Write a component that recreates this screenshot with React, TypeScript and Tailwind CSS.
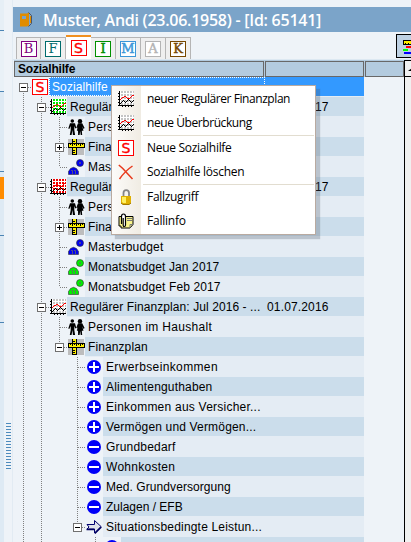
import React from "react";

type IconName = "case" | "chartGreen" | "chartRed" | "chart" | "people" | "ruler" | "blue" | "green" | "plus" | "minus" | "arrow";

function Chart({ grid }: { grid: string }) {
  return (
    <svg width="17" height="17" viewBox="0 0 17 17" shapeRendering="crispEdges" className="shrink-0">
      <rect x="2" y="0" width="14" height="14" fill="#fff" />
      {[1, 4, 7, 10, 13].map((y) => (
        <path key={y} d={`M3 ${y}h13`} stroke={grid} strokeWidth="2" strokeDasharray="2 1" />
      ))}
      <path d="M1.500 0v15M1 14.500h15M0 2.500h1M0 5.500h1M0 8.500h1M0 11.500h1M0 14.500h1M4.500 15v1M7.500 15v1M10.500 15v1M13.500 15v1" stroke="#000" fill="none" />
      <path d="M2 8h1v1H2zM3 7h1v1H3zM4 6h2v1H4zM6 5h2v1H6zM8 6h1v1H8zM9 7h3v1H9zM12 6h1v1h-1zM13 5h1v1h-1zM14 4h2v1h-2z" fill="#f00" />
      <path d="M2 12h1v1H2zM3 11h1v1H3zM4 10h1v1H4zM5 9h1v1H5zM6 10h1v1H6zM7 11h1v1H7zM8 10h1v1H8zM9 9h1v1H9zM10 8h1v1h-1zM11 9h1v1h-1zM12 10h1v1h-1zM13 11h1v1h-1zM14 10h1v1h-1zM15 9h1v1h-1z" fill="#000" />
    </svg>
  );
}

function CaseS() {
  return (
    <span className="flex h-4 w-4 shrink-0 items-center justify-center border border-[#f00] bg-white font-['DejaVu_Sans',sans-serif] text-[14px] leading-none text-[#f00] [-webkit-text-stroke:0.4px_#f00]">
      S
    </span>
  );
}

function Figures({ color }: { color: string }) {
  return (
    <svg width="17" height="17" viewBox="0 0 17 17" className="shrink-0">
      <g fill={color} stroke="#333" strokeWidth=".6">
        <circle cx="12" cy="4" r="3.500" />
        <path d="M.5 15.500v-3l2-3 3-1.200 3 1.200 2 3v3z" />
      </g>
      <path d="M3 11.500h1.500v4M6 11.500h1.500v4M11 4h2M12 3v2" stroke="#666" strokeWidth=".8" fill="none" />
    </svg>
  );
}

function TreeIcon({ name }: { name: IconName }) {
  switch (name) {
    case "case":
      return <CaseS />;
    case "chartGreen":
      return <Chart grid="#00e800" />;
    case "chartRed":
      return <Chart grid="#f00000" />;
    case "chart":
      return <Chart grid="#c4c4c4" />;
    case "blue":
      return <Figures color="#0000f0" />;
    case "green":
      return <Figures color="#00f000" />;
    case "people":
      return (
        <svg width="17" height="17" viewBox="0 0 17 17" className="shrink-0">
          <circle cx="4.300" cy="2" r="1.800" />
          <circle cx="12" cy="2.300" r="2.200" />
          <path d="M2 4.300h5L8.300 9l-1 .6L6.300 7v4l.8 5H4.900l-.5-5-.8 5H1.800l.9-5V7L1.300 10l-1-.6zM10 4.300h4.200L16.600 9l-1 1-1.300-2.500 1.200 4.300h-1.700l.4 4.200h-1.500L12.200 12l-.6 4h-1.500l-.1-4.200H8.800L10 7.500 9.200 9.500 8.400 8.600z" />
        </svg>
      );
    case "ruler":
      return (
        <svg width="17" height="16" viewBox="0 0 17 16" shapeRendering="crispEdges" className="shrink-0">
          <rect width="16" height="16" fill="#bdbdbd" />
          <path d="M4.500 0v15.500h4V0" fill="#ffee00" stroke="#000" />
          <path d="M5 2.500h2M5 11.500h2M5 13.500h2" stroke="#000" />
          <path d="M0 4.500h16v4H0z" fill="#ffee00" stroke="#000" />
          <path d="M2.500 5v1M4.500 5v2M6.500 5v1M8.500 5v2M10.500 5v1M12.500 5v2M14.500 5v1" stroke="#000" />
        </svg>
      );
    case "plus":
    case "minus":
      return (
        <svg width="16" height="16" viewBox="0 0 16 16" className="shrink-0">
          <circle cx="8" cy="8" r="7" fill="#0000f8" />
          <path d={name === "plus" ? "M3 8h10M8 3v10" : "M3 8h10"} stroke="#fff" strokeWidth="2" shapeRendering="crispEdges" />
        </svg>
      );
    case "arrow":
      return (
        <svg width="17" height="16" viewBox="0 0 17 16" className="shrink-0">
          <path d="M1 5.500h7.500v-4l6.500 6-6.500 6.500v-4H1L3 8z" fill="#dfe2ea" stroke="#000070" />
          <path d="M.5 10.500h8M8.800 14.500l6.500-6.500" stroke="#000060" strokeWidth="1.600" fill="none" />
        </svg>
      );
  }
}

/* Guide codes: "|" through line, "t" branch, "l" last branch, "r" root, " " blank. */
type Item = { guides: string; box?: "+" | "-"; icon: IconName; text: string; date?: string; tracking: string };

const items: Item[] = [
  { guides: "r", box: "-", icon: "case", text: "Sozialhilfe", tracking: "tracking-[0.1px]" },
  { guides: "|t", box: "-", icon: "chartGreen", text: "Regulärer Finanzplan: Jan 2017 - ...", date: "01.01.2017", tracking: "tracking-[0.08px]" },
  { guides: "||t", icon: "people", text: "Personen im Haushalt", tracking: "tracking-[0.3px]" },
  { guides: "||t", box: "+", icon: "ruler", text: "Finanzplan", tracking: "tracking-[0.1px]" },
  { guides: "||l", icon: "blue", text: "Masterbudget", tracking: "tracking-[0.17px]" },
  { guides: "|t", box: "-", icon: "chartRed", text: "Regulärer Finanzplan: Jan 2017 - ...", date: "01.01.2017", tracking: "tracking-[0.08px]" },
  { guides: "||t", icon: "people", text: "Personen im Haushalt", tracking: "tracking-[0.3px]" },
  { guides: "||t", box: "+", icon: "ruler", text: "Finanzplan", tracking: "tracking-[0.1px]" },
  { guides: "||t", icon: "blue", text: "Masterbudget", tracking: "tracking-[0.17px]" },
  { guides: "||t", icon: "green", text: "Monatsbudget Jan 2017", tracking: "tracking-[0.12px]" },
  { guides: "||l", icon: "green", text: "Monatsbudget Feb 2017", tracking: "tracking-[0.12px]" },
  { guides: "|t", box: "-", icon: "chart", text: "Regulärer Finanzplan: Jul 2016 - ...", date: "01.07.2016", tracking: "tracking-[0.08px]" },
  { guides: "||t", icon: "people", text: "Personen im Haushalt", tracking: "tracking-[0.3px]" },
  { guides: "||l", box: "-", icon: "ruler", text: "Finanzplan", tracking: "tracking-[0.1px]" },
  { guides: "|| t", icon: "plus", text: "Erwerbseinkommen", tracking: "tracking-[0.37px]" },
  { guides: "|| t", icon: "plus", text: "Alimentenguthaben", tracking: "tracking-[0.18px]" },
  { guides: "|| t", icon: "plus", text: "Einkommen aus Versicher...", tracking: "tracking-[0.23px]" },
  { guides: "|| t", icon: "plus", text: "Vermögen und Vermögen...", tracking: "tracking-[0.17px]" },
  { guides: "|| t", icon: "minus", text: "Grundbedarf", tracking: "tracking-[0.2px]" },
  { guides: "|| t", icon: "minus", text: "Wohnkosten", tracking: "tracking-[0.27px]" },
  { guides: "|| t", icon: "minus", text: "Med. Grundversorgung", tracking: "tracking-[0.07px]" },
  { guides: "|| t", icon: "minus", text: "Zulagen / EFB", tracking: "tracking-normal" },
  { guides: "|| l", box: "-", icon: "arrow", text: "Situationsbedingte Leistun...", tracking: "tracking-[0.18px]" },
  { guides: "||  t", icon: "minus", text: "", tracking: "tracking-normal" },
];

function Guide({ code, box }: { code: string; box?: "+" | "-" }) {
  const vertical = code === "|" || code === "t" ? "M9.500 0v20" : code === "l" ? "M9.500 0v10" : code === "r" ? "M9.500 10v10" : "";
  return (
    <svg width="18" height="20" viewBox="0 0 18 20" shapeRendering="crispEdges" className="shrink-0">
      <path d={vertical + (code === "|" || code === " " ? "" : "M10 10.500h8")} stroke="#808080" strokeDasharray="1 1" fill="none" />
      {box && (
        <>
          <rect x="5.500" y="6.500" width="8" height="8" fill="#fff" stroke="#707070" />
          <path d={box === "+" ? "M7 10.500h5M9.500 8v5" : "M7 10.500h5"} stroke="#000" />
        </>
      )}
    </svg>
  );
}

function TreeRow({ item, index }: { item: Item; index: number }) {
  const tone =
    index === 0
      ? "bg-[#3399ff] text-white border-b border-[#e4ecf4]"
      : index % 2
        ? "bg-[#cbddeb] border-b border-[#e4ecf4]"
        : "bg-[#e4ecf4]";
  return (
    <div className="flex h-5 w-[350px] shrink-0">
      {item.guides.split("").map((code, i) => (
        <Guide key={i} code={code} box={i === item.guides.length - 1 ? item.box : undefined} />
      ))}
      <span className="flex w-[17px] shrink-0 items-center">
        <TreeIcon name={item.icon} />
      </span>
      <div className={`flex min-w-0 flex-1 whitespace-pre ${tone}`}>
        <span
          className={`flex flex-1 items-center ${item.tracking} ${
            index === 0 ? "mr-[99px] border border-dotted border-white pl-[2px]" : "pl-[3px]"
          }`}
        >
          {item.text}
        </span>
        {item.date && <span className="flex w-[97px] shrink-0 items-center tracking-[0.15px]">{item.date}</span>}
      </div>
    </div>
  );
}

const tabs = [
  { letter: "B", style: "text-[#800080] border-[#800080]" },
  { letter: "F", style: "text-[#006c6c] border-[#006c6c]" },
  { letter: "S", style: "text-[#ff0000] border-[#ff0000]" },
  { letter: "I", style: "text-[#009000] border-[#009000] [-webkit-text-stroke:0.5px_#009000]" },
  { letter: "M", style: "text-[#3c96d8] border-[#3c96d8] [-webkit-text-stroke:0.5px_#3c96d8]" },
  { letter: "A", style: "text-[#b4b4b4] border-[#b4b4b4] [-webkit-text-stroke:0.4px_#b4b4b4]" },
  { letter: "K", style: "text-[#784800] border-[#784800] [-webkit-text-stroke:0.4px_#784800]" },
];

function MenuItem({ icon, label, tracking }: { icon: React.ReactNode; label: string; tracking: string }) {
  return (
    <div className="flex h-6 items-center">
      <span className="flex w-[35px] items-center pl-[6px]">{icon}</span>
      <span className={`whitespace-nowrap ${tracking}`}>{label}</span>
    </div>
  );
}

function Separator() {
  return <div className="mr-px ml-[31px] h-px bg-[#e2ddd0]" />;
}

function ContextMenu() {
  return (
    <div className="absolute top-[85px] left-[111px] h-[150px] w-[205px] border border-[#b9aaa0] bg-[linear-gradient(90deg,#fcfbf9_0,#f0ece3_29px,#fff_29px)] py-px font-['Open_Sans','Noto_Sans',sans-serif] text-[12px] leading-none text-black shadow-[4px_4px_1px_rgba(80,90,105,0.28)]">
      <MenuItem icon={<Chart grid="#c4c4c4" />} label="neuer Regulärer Finanzplan" tracking="tracking-[-0.43px]" />
      <MenuItem icon={<Chart grid="#c4c4c4" />} label="neue Überbrückung" tracking="tracking-[-0.42px]" />
      <Separator />
      <MenuItem icon={<CaseS />} label="Neue Sozialhilfe" tracking="tracking-[-0.3px]" />
      <MenuItem
        icon={
          <svg width="17" height="17" viewBox="0 0 17 17">
            <path d="M.8 1l4 3.500L14.500 15M14.500 2C10 5 5 10 1.500 15" stroke="#e83a1c" strokeWidth="1.500" fill="none" />
          </svg>
        }
        label="Sozialhilfe löschen"
        tracking="tracking-[-0.28px]"
      />
      <Separator />
      <MenuItem
        icon={
          <svg width="17" height="17" viewBox="0 0 17 17">
            <path d="M5.500 8V4q0-2.800 2.700-2.800T11 4v4" stroke="#858585" strokeWidth="1.800" fill="none" />
            <path d="M3 7h10v7l-2 1.500H5L3 14z" fill="#e0b000" />
            <path d="M4 8h4v6H5l-1-1z" fill="#fff060" />
            <path d="M3 14l2 1.500h6l2-1.500" stroke="#a07800" fill="none" />
          </svg>
        }
        label="Fallzugriff"
        tracking="tracking-[-0.3px]"
      />
      <MenuItem
        icon={
          <svg width="17" height="17" viewBox="0 0 17 17">
            <path d="M1 3.500h14v8L12 15H3v-2H1z" fill="#f8f48c" stroke="#000" />
            <path d="M12 15v-3.500h3M9 5.500h5M9 7.500h5" stroke="#777" fill="none" />
            <path d="M3.500 11V3.500q0-2.500 2-2.500t2 2.500V12q0 1.500-1.200 1.500T5.200 12V5" stroke="#000" strokeWidth="1.200" fill="#fff" />
          </svg>
        }
        label="Fallinfo"
        tracking="tracking-[-0.22px]"
      />
    </div>
  );
}

export default function App() {
  return (
    <div className="relative flex h-[542px] w-[411px] overflow-hidden bg-[#eef3f8] font-['Liberation_Sans',Arial,sans-serif] text-[12px] leading-none text-black">
      <div className="flex w-1 shrink-0 flex-col bg-[#deeaf4]">
        <div className="h-[31px] border-b border-[#4b84b4] bg-[#e6eff6]" />
        <div className="h-[61px] border-b border-[#4b84b4] bg-[#e9f1f7]" />
        <div className="h-[80px] border-b border-[#4b84b4]" />
        <div className="mt-[5px] h-[22px] bg-[#ff8c00]" />
        <div className="h-[37px] border-b border-[#4b84b4]" />
        <div className="h-[87px] border-b border-[#4b84b4]" />
      </div>
      <div className="w-[9px] shrink-0 border-r border-[#e2ebf3] bg-[#eef3f8] pt-[423px] pl-[2px]">
        <div className="h-[46px] w-[5px] bg-[repeating-linear-gradient(180deg,#4d8bbd_0,#4d8bbd_1px,transparent_1px,transparent_3px)]" />
      </div>
      <main className="flex min-w-0 flex-1 flex-col pt-[7px]">
        <header className="flex h-[25px] shrink-0 items-center bg-[#7ba4c9] pl-[7px] font-['Open_Sans','Noto_Sans',sans-serif] text-[16px] font-semibold text-white">
          <svg width="13" height="15" viewBox="0 0 13 15" className="mr-[10px] shrink-0">
            <path d="M0 1.500h7l2-1v13l-2 1H0z" fill="#e08c00" />
            <path d="M2 4h4v3H2z" fill="#7ba4c9" />
            <path d="M8.500.5l3 3v8l-3 3" stroke="#4a5568" fill="none" />
            <path d="M10.500 4v7" stroke="#e08c00" />
          </svg>
          <span className="tracking-[-0.26px] whitespace-nowrap">Muster, Andi (23.06.1958) - [Id: 65141]</span>
        </header>
        <div className="flex h-7 shrink-0 items-end justify-between border-b border-[#dce8f2] pl-[3px]">
          <div className="flex items-end">
            {tabs.map((tab) => (
              <div
                key={tab.letter}
                className={
                  tab.letter === "S"
                    ? "flex h-6 w-[25px] items-center justify-center border-t-2 border-[#f09020] bg-white"
                    : "flex h-[22px] w-[25px] items-center justify-center border-t border-r border-[#b5b5b5] bg-[#efefef] first:border-l"
                }
              >
                {tab.letter === "S" ? (
                  <CaseS />
                ) : (
                  <span
                    className={`flex h-4 w-4 items-center justify-center border bg-white font-['DejaVu_Serif',serif] text-[13px] leading-none ${tab.style}`}
                  >
                    {tab.letter}
                  </span>
                )}
              </div>
            ))}
          </div>
          <div className="mb-px h-6 w-[15px] overflow-hidden border border-r-0 border-black bg-[#bed1e3] pt-[5px] pl-[6px]">
            <svg width="12" height="16" viewBox="0 0 12 16" shapeRendering="crispEdges">
              <path d="M.5.500h12v4H.5z" fill="#ffee00" stroke="#000" />
              <path d="M2.500 3v2M5.500 3v2" stroke="#000" />
              <path d="M3 7h9" stroke="#f00" strokeWidth="2" />
              <path d="M0 10h5" stroke="#0f0" strokeWidth="2" />
              <path d="M1 13h11" stroke="#00f" strokeWidth="2" />
            </svg>
          </div>
        </div>
        <div className="flex min-h-0 flex-1">
          <section className="flex w-[391px] shrink-0 flex-col pl-px">
            <div className="flex h-[17px] shrink-0 gap-px bg-[#b3cbdf] pt-px">
              <div className="flex h-4 w-[250px] items-center border border-[#686868] pl-[3px] text-[12px] font-bold tracking-[-0.2px]">Sozialhilfe</div>
              <div className="h-4 w-[99px] border border-[#686868]" />
              <div className="h-4 flex-1 border border-[#686868]" />
            </div>
            <div className="flex min-h-0 flex-1 flex-col overflow-hidden">
              {items.map((item, i) => (
                <TreeRow key={i} item={item} index={i} />
              ))}
            </div>
          </section>
          <aside className="flex-1 border-l border-black bg-[#f0f0f0]">
            <div className="h-[17px] border-t border-b border-black pt-[7px] pl-[3px]">
              <svg width="4" height="4" viewBox="0 0 4 4" className="block">
                <path d="M0 3h4V0z" />
              </svg>
            </div>
          </aside>
        </div>
      </main>
      <ContextMenu />
    </div>
  );
}
